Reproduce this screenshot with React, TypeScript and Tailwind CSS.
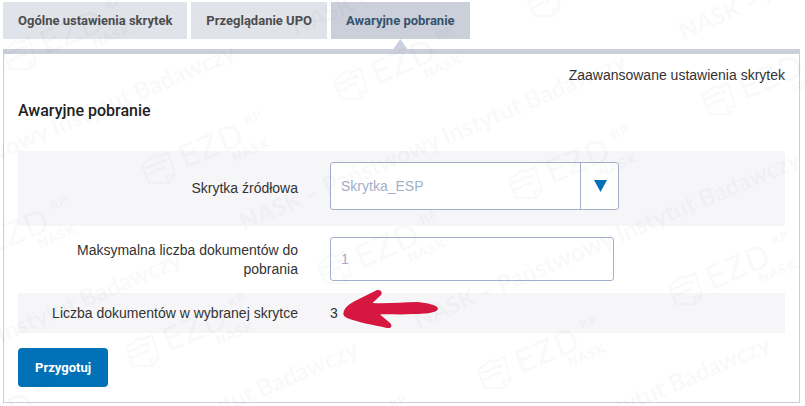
import { useState } from "react";
import type { ReactNode } from "react";
import clsx from "clsx";

const TABS = ["Ogólne ustawienia skrytek", "Przeglądanie UPO", "Awaryjne pobranie"];

const LOGOS = [
  [20, 54],
  [351, 84],
  [719, 99],
  [544, 1],
  [159, 168],
  [526, 183],
  [-35, 254],
  [335, 268],
  [686, 289],
  [143, 351],
  [495, 373],
  [-50, 437],
  [304, 453],
];

const CAPTIONS = [
  [-147, 222],
  [296, 36],
  [683, 40],
  [244, 231],
  [418, 329],
  [-201, 429],
  [-24, 519],
  [388, 514],
];

function Watermark() {
  return (
    <svg
      className="pointer-events-none absolute inset-0 h-full w-full overflow-hidden"
      aria-hidden="true"
    >
      <defs>
        <g id="wm-logo">
          <g fill="none" stroke="#000" strokeWidth="2" strokeLinejoin="round" strokeLinecap="round">
            <path d="M-17 -3L-10 15H10L16 7L9 -16L-1 -11L-4 -13Z" />
            <path d="M16 7L8 8L10 15" />
            <path d="M-14 0L-6 -2L-3 -5L4 -7" />
            <path d="M-12 7L-6 5L-3 2L3 1" />
            <circle cx="5" cy="-7" r="1" />
            <circle cx="4" cy="0" r="1" />
          </g>
          <g transform="rotate(-23)">
            <text x="23" y="11" className="font-['DejaVu_Sans',sans-serif] text-[32px]">
              EZD
            </text>
            <text x="97" y="-6" className="font-['DejaVu_Sans',sans-serif] text-[12px] font-bold">
              RP
            </text>
            <text x="71" y="24" className="font-['DejaVu_Sans',sans-serif] text-[13px] font-bold">
              NASK
            </text>
          </g>
        </g>
      </defs>
      <g opacity="0.025">
        {LOGOS.map(([x, y]) => (
          <use key={`${x}-${y}`} href="#wm-logo" x={x} y={y} />
        ))}
        {CAPTIONS.map(([x, y]) => (
          <text
            key={`${x}-${y}`}
            transform={`translate(${x} ${y}) rotate(-23)`}
            className="font-['Lato',sans-serif] text-[24px] font-bold"
          >
            NASK – Państwowy Instytut Badawczy
          </text>
        ))}
      </g>
    </svg>
  );
}

function Row({
  label,
  htmlFor,
  className,
  children,
}: {
  label: string;
  htmlFor: string;
  className?: string;
  children: ReactNode;
}) {
  return (
    <div className={clsx("grid grid-cols-[8fr_13fr] items-center gap-x-8", className)}>
      <label htmlFor={htmlFor} className="pl-8 text-right">
        {label}
      </label>
      <div className="flex items-center">{children}</div>
    </div>
  );
}

export default function App() {
  const [tab, setTab] = useState(2);
  const [limit, setLimit] = useState("1");

  return (
    <main className="relative overflow-hidden bg-white pt-[2px] pr-[5px] pb-[3px] pl-[3px] font-['Liberation_Sans',Arial,sans-serif] text-[14px] leading-[19px] text-[#333]">
      <nav className="flex gap-1">
        {TABS.map((name, i) => (
          <button
            key={name}
            type="button"
            onClick={() => setTab(i)}
            className={clsx(
              "relative h-[37px] px-[15px] font-['Roboto',sans-serif] text-[13px] font-bold",
              i === tab ? "bg-[#cbcfda] text-[#34536e]" : "bg-[#e0e3ea] text-[#4d4d4d]"
            )}
          >
            {name}
            {i === tab && (
              <span className="absolute top-full left-1/2 h-[10px] w-[14px] -translate-x-1/2 bg-[#cccfdf] [clip-path:polygon(50%_0,100%_100%,0_100%)]" />
            )}
          </button>
        ))}
      </nav>

      <section className="mt-[10px] border border-t-[5px] border-[#cbcddd] border-t-[#cbcfda] px-[14px] pb-[15px]">
        <div className="flex justify-end pt-3">
          <a href="#advanced">Zaawansowane ustawienia skrytek</a>
        </div>
        <h1 className="mt-4 font-['Roboto',sans-serif] text-[16px] leading-5 font-medium text-[#222]">
          Awaryjne pobranie
        </h1>

        <form className="mt-[30px]" onSubmit={(e) => e.preventDefault()}>
          <Row label="Skrytka źródłowa" htmlFor="source" className="h-[75px] bg-[#f6f6f9]">
            <div className="relative mb-[5px] h-12 w-[289px]">
              <select
                id="source"
                className="h-full w-full appearance-none rounded-[3px] border border-[#a3afcb] bg-white pr-10 pl-[10px] text-[#a3afcb]"
              >
                <option>Skrytka_ESP</option>
              </select>
              <span className="pointer-events-none absolute inset-y-0 right-0 flex w-[39px] items-center justify-center border-l border-[#a3afcb]">
                <svg width="13" height="12" viewBox="0 0 13 12">
                  <path d="M0 0h13L6.5 12z" fill="#0071b6" />
                </svg>
              </span>
            </div>
          </Row>

          <Row label="Maksymalna liczba dokumentów do pobrania" htmlFor="limit" className="h-[67px]">
            <input
              id="limit"
              type="text"
              value={limit}
              onChange={(e) => setLimit(e.target.value)}
              className="mb-[2px] h-11 w-[284px] rounded-[3px] border border-[#a3afcb] bg-white px-[10px] text-[#a3afcb]"
            />
          </Row>

          <Row label="Liczba dokumentów w wybranej skrytce" htmlFor="count" className="h-10 bg-[#f6f6f9]">
            <output id="count">3</output>
            <svg className="-mt-4 -mb-2 ml-[5px]" width="96" height="38" viewBox="0 0 96 38" aria-hidden="true">
              <path
                d="M0.500 23C1 18 6 14 12 11L33 0.500C37 -1 40 2 38 5L29.500 13C45 14 58 12 75 12C84 13 95 15 95 19C94 23 82 24 70 24C58 25 47 24 37 24.500L47 33C50 36 48 39 44 38C30 35 14 32 4 28C1 26 0 25 0.500 23Z"
                fill="#d6173f"
              />
            </svg>
          </Row>

          <button
            type="submit"
            className="mt-[15px] h-[39px] rounded-[4px] bg-[#0071b6] px-[17px] font-['Roboto',sans-serif] text-[13px] font-bold text-white"
          >
            Przygotuj
          </button>
        </form>
      </section>

      <Watermark />
    </main>
  );
}
